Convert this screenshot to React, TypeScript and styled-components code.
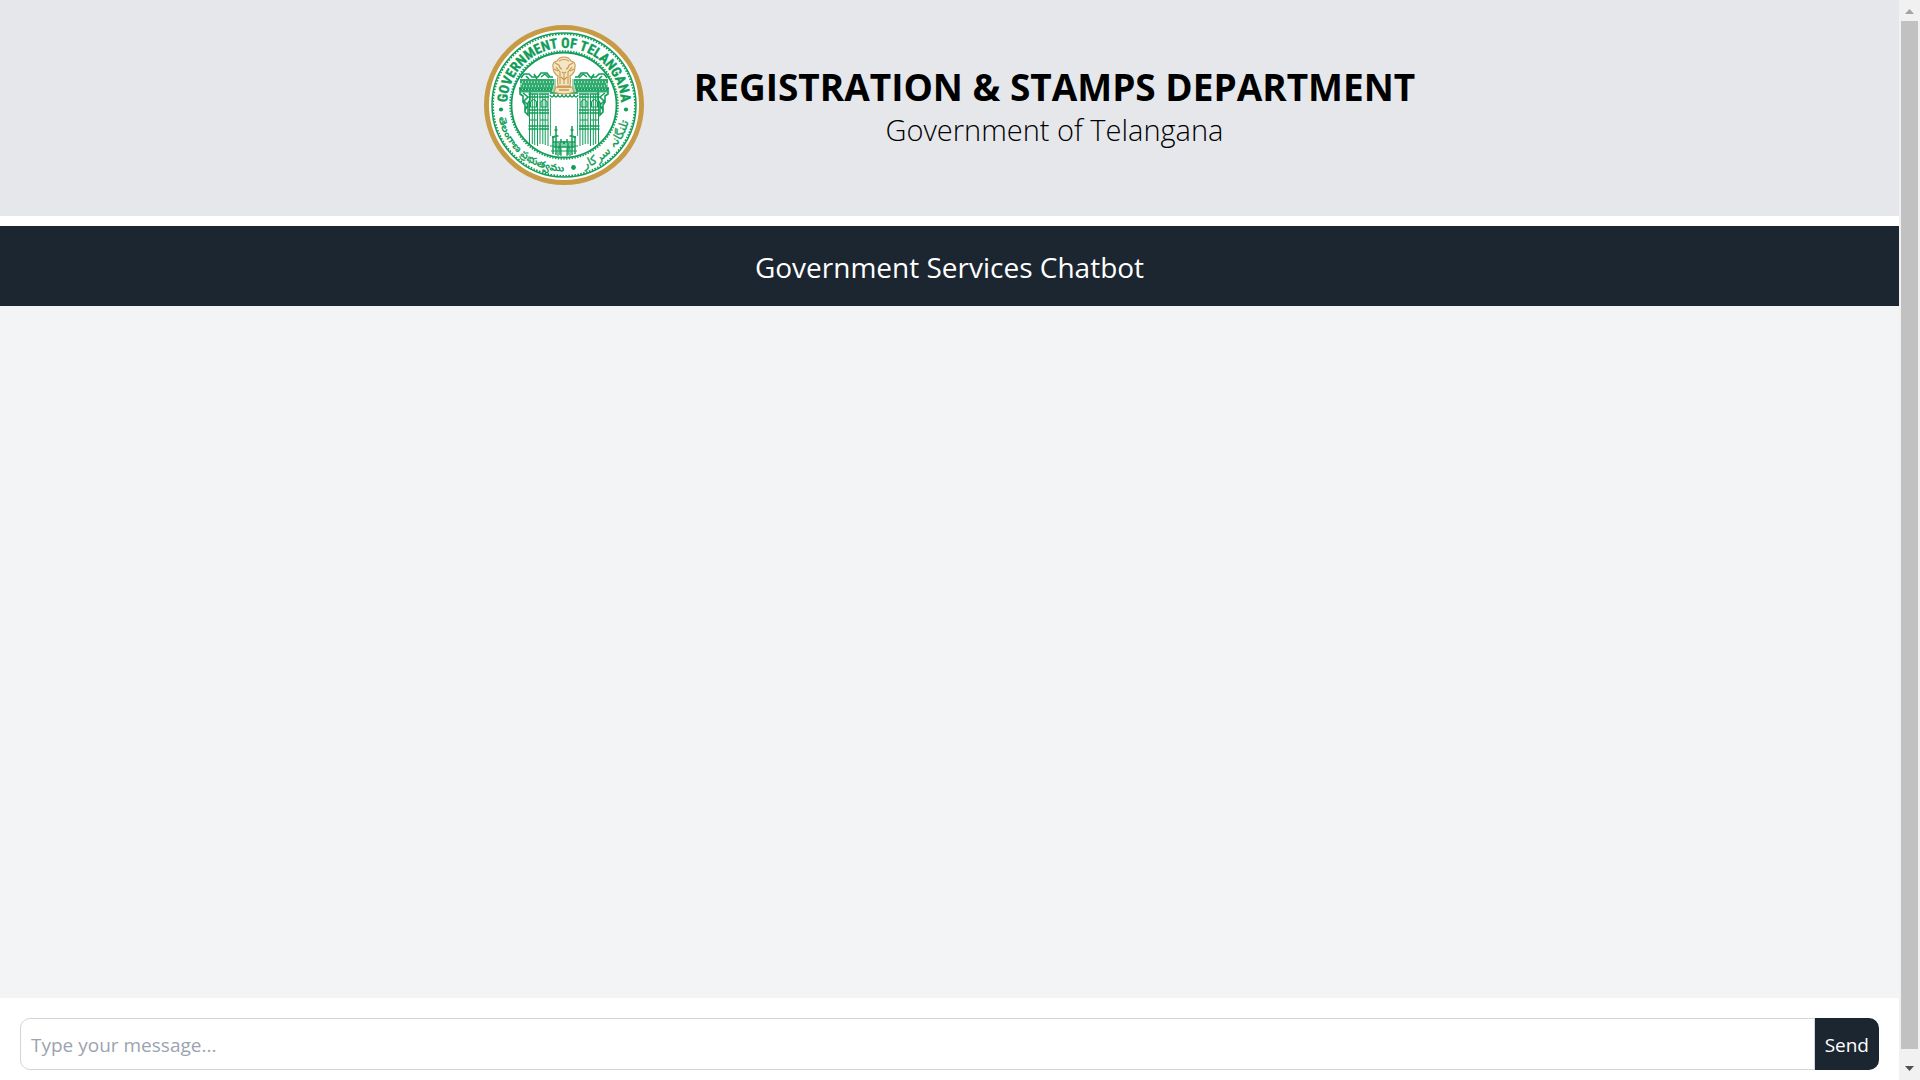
import React, { useState } from "react";
import styled, { createGlobalStyle } from "styled-components";

const GlobalStyle = createGlobalStyle`
  *, *::before, *::after { box-sizing: border-box; }
  body {
    margin: 0;
    background: #ffffff;
    color: #000000;
    font-family: "Open Sans", "Noto Sans", sans-serif;
  }
`;

const Shell = styled.div`
  display: grid;
  grid-template-columns: minmax(0, 1fr) 21px;
  height: 100vh;
  overflow: hidden;
`;

const Page = styled.div`
  display: flex;
  flex-direction: column;
  min-height: 0;
`;

const Header = styled.header`
  display: flex;
  justify-content: center;
  align-items: center;
  gap: 50px;
  padding: 25px 25px 31px;
  margin-bottom: 10px;
  background: #e5e7eb;
`;

const Heading = styled.div`
  text-align: center;
`;

const Title = styled.h1`
  margin: 0;
  font-size: 37px;
  line-height: 50px;
  font-weight: 700;
`;

const Subtitle = styled.p`
  margin: 0;
  font-size: 29px;
  line-height: 36px;
  font-weight: 350;
`;

const Banner = styled.h2`
  margin: 0;
  padding: 21px 20px 19px;
  background: #1c2631;
  color: #ffffff;
  font-size: 28px;
  line-height: 40px;
  font-weight: 400;
  text-align: center;
`;

const Messages = styled.main`
  flex: 1;
  min-height: 0;
  background: #f3f4f6;
`;

const Composer = styled.form`
  display: flex;
  padding: 20px 20px 10px;
  background: #ffffff;
`;

const MessageInput = styled.input`
  flex: 1;
  min-width: 0;
  padding: 11px 10px 9px;
  border: 1px solid #d1d5db;
  border-radius: 10px 0 0 10px;
  background: #ffffff;
  font: inherit;
  font-size: 19px;
  line-height: 30px;
  outline: none;
  &::placeholder { color: #9ca3af; opacity: 1; }
`;

const SendButton = styled.button`
  padding: 12px 10px 10px;
  border: 0;
  border-radius: 0 10px 10px 0;
  background: #1c2631;
  color: #ffffff;
  font: inherit;
  font-size: 19px;
  line-height: 30px;
`;

const Scrollbar = styled.div`
  display: flex;
  flex-direction: column;
  align-items: center;
  background: #f1f1f1;
`;

const ScrollArrow = styled.svg`
  display: block;
  width: 21px;
  height: 21px;
`;

const ScrollTrack = styled.div`
  flex: 1;
  width: 17px;
  padding-bottom: 10px;
`;

const ScrollThumb = styled.div`
  height: 100%;
  background: #c1c1c1;
`;

const SealImage = styled.svg`
  display: block;
  width: 160px;
  height: 160px;
  flex: none;
`;

const GREEN = "#0f9d58";
const GOLD = "#c79a46";

function GateHalf() {
  return (
    <g fill="none" stroke={GREEN} strokeWidth="1">
      <path d="M36 54h36v14H36z" fill="#9ad4b7" stroke="none" />
      <path d="M37 53l3-4h5l3 3h6l3-4h6l3 4h3M36 55h34M38 59h32M35 63h34M37 66h31" strokeWidth="1.5" />
      <path d="M36 57h34M37 61h33M36 64.5h32" strokeDasharray="2 1" strokeWidth="1.6" />
      <path d="M42 51l3 3M50 49l3 5M57 52l4-3 4 4" strokeWidth="1.5" />
      <path d="M36 63v6l3 2v6l2 3v7l3 3v-12l2-3v-8M39 68l5 4-4 4 4 4-3 5" strokeWidth="1.6" />
      <path d="M66 70q2 4 4 0 2 4 4 0 2 4 4 0 1 2 2 2M66 68h14" strokeWidth="1.6" />
      {[45.5, 56].map((x) => (
        <g key={x}>
          <path d={`M${x} 69v50M${x + 8} 69v52M${x + 2.8} 69v50M${x + 5.2} 69v51`} strokeWidth="1" />
          <path d={`M${x - 1} 69h10M${x - 1} 72h10M${x - 1} 85h10M${x - 1} 88h10M${x - 1} 101h10M${x - 1} 104h10`} strokeWidth="1.6" />
          <path d={`M${x + 1} 82v-5q3-5 6 0v5zM${x} 95h8`} strokeWidth="1.2" />
        </g>
      ))}
      <path d="M66.500 73v38" strokeWidth="0.8" />
      <path d="M69 129v-18M68 112h3M72 130v-29M70.500 105h3M70.500 111h4M76 130v-12M69 117h11M70 122h10M77 118v-4M80 119v-3" strokeWidth="1.5" />
      <path d="M74 131v-7q2-4 3 0v7M66 121h14M67 126h13M70 119h10" strokeWidth="1.2" />
    </g>
  );
}

function Seal() {
  return (
    <SealImage viewBox="0 0 160 160" role="img" aria-label="Government of Telangana seal">
      <defs>
        <path id="upperArc" d="M26.500 99.500a57 57 0 1 1 107 0" />
        <path id="lowerArc" d="M13.400 80a66.600 66.600 0 0 0 133.200 0" />
      </defs>
      <circle cx="80" cy="80" r="77.5" fill="#ffffff" stroke={GOLD} strokeWidth="5" />
      <circle cx="80" cy="80" r="72" fill="none" stroke={GREEN} strokeWidth="1.5" />
      <circle cx="80" cy="80" r="70.8" fill="none" stroke={GREEN} strokeWidth="1.6" strokeDasharray="1.6 1.4" />
      <circle cx="80" cy="80" r="52.5" fill="none" stroke={GREEN} strokeWidth="1.8" />
      <circle cx="80" cy="80" r="54" fill="none" stroke={GREEN} strokeWidth="1.6" strokeDasharray="1.4 1.4" />
      <GateHalf />
      <g transform="translate(160 0) scale(-1 1)"><GateHalf /></g>
      <g fill="#f3e4c8" stroke={GOLD} strokeWidth="1.1">
        <path d="M70 67l2-5h16l2 5q-10 4-20 0z" />
        <path d="M74 61q-1-5 0-10-5-3-5-9-1-5 4-6 2-4 7-4t7 4q5 1 4 6 0 6-5 9 1 5 0 10z" />
        <path d="M75 36q5-3 10 0M75 40q1 4 3 4M85 40q-1 4-3 4M78 47q2 2 4 0M72 42l4 5v12M88 42l-4 5v12M80 49v10M77 52l3 3 3-3M71 38l4 2M89 38l-4 2M70 44l4 2M90 44l-4 2" fill="none" />
        <path d="M73 62h14M75 65h10" strokeWidth="1.6" />
      </g>
      <g fill={GREEN}>
        <circle cx="17" cy="84.5" r="2.1" />
        <circle cx="142" cy="84.5" r="2.1" />
        <circle cx="89.5" cy="142.5" r="2.4" />
        <text fontFamily="'Liberation Sans Narrow', 'Roboto Condensed', Roboto, sans-serif" fontWeight="700" fontSize="14" textAnchor="middle" stroke={GREEN} strokeWidth="0.3">
          <textPath href="#upperArc" startOffset="50%">GOVERNMENT OF TELANGANA</textPath>
        </text>
        <text fontFamily="'Noto Sans Telugu', 'Noto Sans', sans-serif" fontWeight="700" fontSize="10" textAnchor="middle">
          <textPath href="#lowerArc" startOffset="28%">తెలంగాణ ప్రభుత్వము</textPath>
        </text>
        <text fontFamily="'DejaVu Sans', sans-serif" fontSize="12" textAnchor="middle" stroke={GREEN} strokeWidth="0.3">
          <textPath href="#lowerArc" startOffset="76%">تلنگانہ سرکار</textPath>
        </text>
      </g>
    </SealImage>
  );
}

export default function App() {
  const [message, setMessage] = useState("");
  return (
    <>
      <GlobalStyle />
      <Shell>
        <Page>
          <Header>
            <Seal />
            <Heading>
              <Title>REGISTRATION &amp; STAMPS DEPARTMENT</Title>
              <Subtitle>Government of Telangana</Subtitle>
            </Heading>
          </Header>
          <Banner>Government Services Chatbot</Banner>
          <Messages />
          <Composer onSubmit={(e) => { e.preventDefault(); setMessage(""); }}>
            <MessageInput
              type="text"
              aria-label="Message"
              placeholder="Type your message..."
              value={message}
              onChange={(e) => setMessage(e.target.value)}
            />
            <SendButton type="submit">Send</SendButton>
          </Composer>
        </Page>
        <Scrollbar aria-hidden="true">
          <ScrollArrow viewBox="0 0 21 21"><path d="M6 14l4.500-5 4.500 5z" fill="#a3a3a3" /></ScrollArrow>
          <ScrollTrack><ScrollThumb /></ScrollTrack>
          <ScrollArrow viewBox="0 0 21 21"><path d="M6 7l4.500 5 4.500-5z" fill="#505050" /></ScrollArrow>
        </Scrollbar>
      </Shell>
    </>
  );
}
